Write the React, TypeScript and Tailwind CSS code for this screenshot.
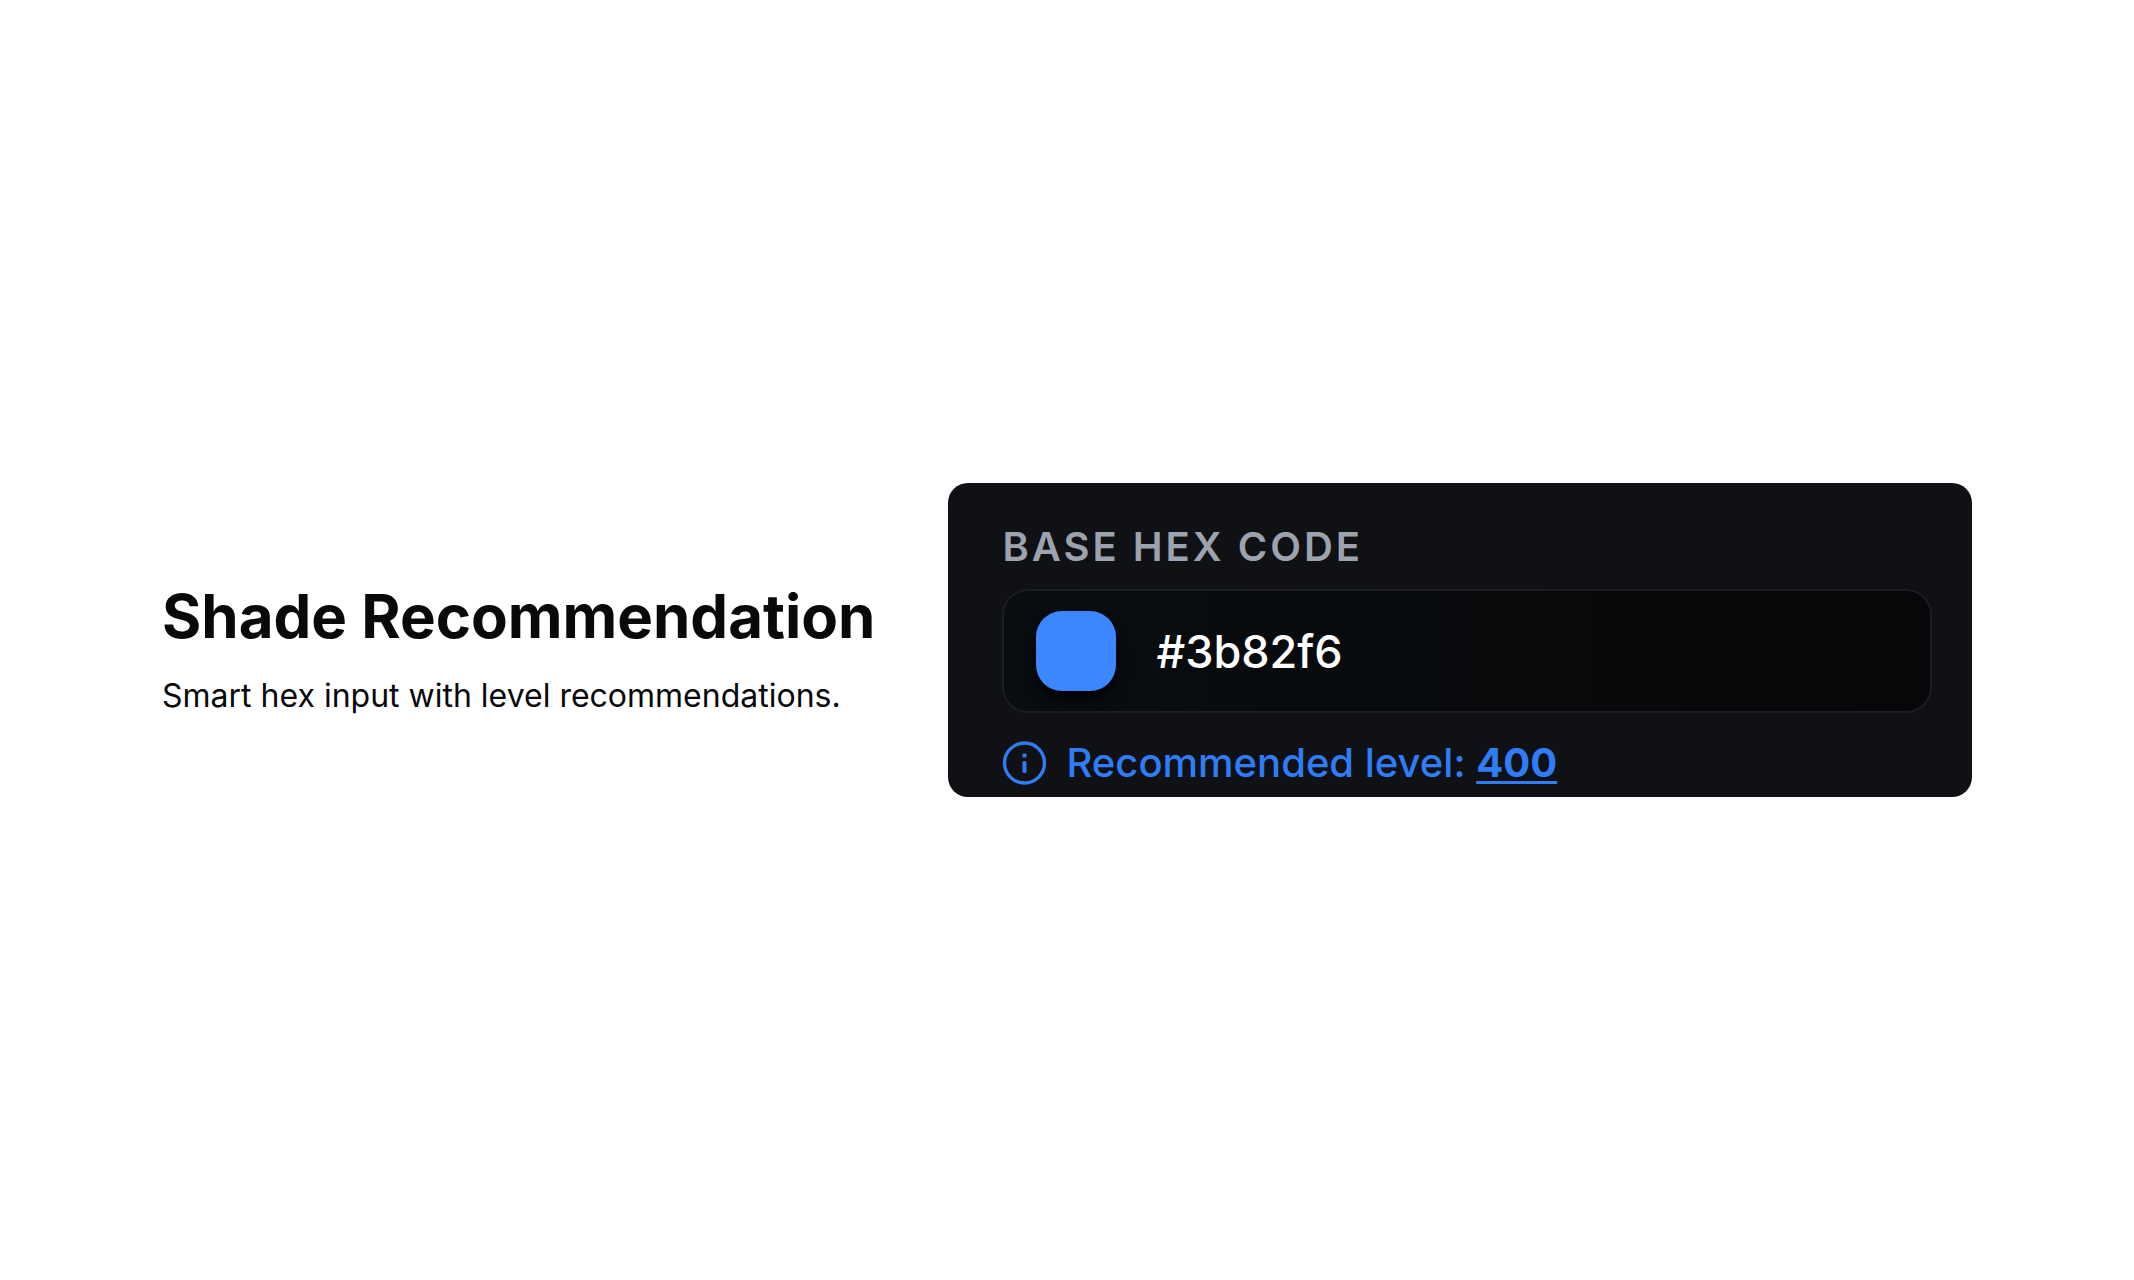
import { useState } from "react";

function InfoIcon() {
  return (
    <svg viewBox="0 0 44 44" className="size-11 shrink-0" fill="none" aria-hidden="true">
      <circle cx="22.5" cy="22" r="20" stroke="currentColor" strokeWidth="3.4" />
      <rect x="20.5" y="12.500" width="4" height="4" rx="1" fill="currentColor" />
      <rect x="20.5" y="20" width="4" height="12" rx="1.500" fill="currentColor" />
    </svg>
  );
}

export default function App() {
  const [hex, setHex] = useState("#3b82f6");

  return (
    <main className="flex min-h-screen items-center gap-[73px] bg-white px-[162px] font-['Inter',sans-serif] text-[#09090b]">
      <section className="flex shrink-0 flex-col gap-5 pt-5">
        <h1 className="text-6xl leading-[72px] font-bold">Shade Recommendation</h1>
        <p className="text-[32px] leading-[48px]">Smart hex input with level recommendations.</p>
      </section>

      <section className="flex min-w-0 flex-1 flex-col rounded-[20px] bg-[#101115] pt-10 pr-10 pb-1.5 pl-[54px]">
        <label htmlFor="hex" className="text-[40px] leading-[48px] font-semibold tracking-[3px] text-[#9ca3af]">
          BASE HEX CODE
        </label>
        <div className="mt-[18px] flex items-center gap-10 rounded-[26px] border-2 border-[#1b1d22] bg-linear-to-r from-[#0a0d10] to-[#060708] px-8 py-5">
          <span className="size-20 shrink-0 rounded-[26px] bg-[#3c87ff] shadow-lg shadow-black" />
          <input
            id="hex"
            type="text"
            value={hex}
            onChange={(e) => setHex(e.target.value)}
            className="min-w-0 flex-1 bg-transparent pt-0.5 text-[45px] leading-[56px] font-medium text-white outline-none"
          />
        </div>
        <div className="mt-[22px] flex items-center gap-5 text-[40px] leading-[56px] font-medium text-[#2f7df6]">
          <InfoIcon />
          <p>
            Recommended level:{" "}
            <button type="button" className="font-bold underline decoration-[3px] underline-offset-4">
              400
            </button>
          </p>
        </div>
      </section>
    </main>
  );
}
